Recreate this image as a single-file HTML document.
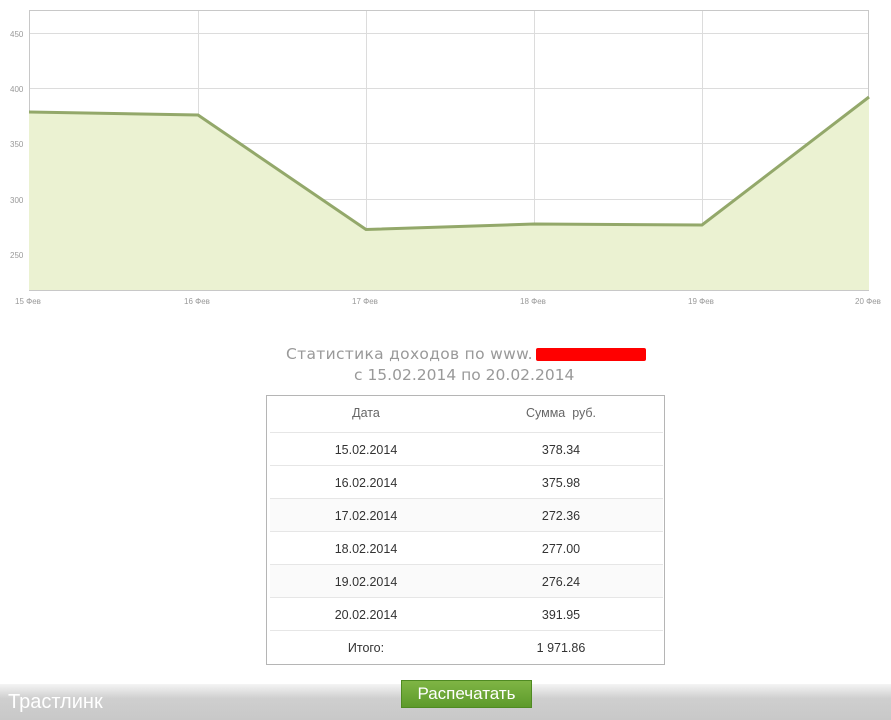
<!DOCTYPE html>
<html><head><meta charset="utf-8"><style>
body{margin:0;width:891px;height:720px;background:#fff;position:relative;overflow:hidden;font-family:"Liberation Sans","DejaVu Sans",sans-serif}
.t{position:absolute;left:266px;top:395px;width:397px;height:268px;border:1px solid #b5b5b5;background:#fff}
.r{position:absolute;left:3px;width:393px;height:33px;border-top:1px solid #e6e6e6;font-size:12.5px;color:#333}
.r span{position:absolute;top:10px;width:140px;text-align:center}
.a{left:26px}.b{left:221px}
.foot{position:absolute;left:0;top:684px;width:891px;height:36px;background:linear-gradient(#f4f4f4,#cfcfcf 40%,#c8c8c8)}
.ti{position:absolute;font-family:"DejaVu Sans",sans-serif;font-size:15.5px;color:#999;white-space:nowrap}
</style></head><body>
<svg width="891" height="320" style="position:absolute;left:0;top:0">
<g stroke="#dcdcdc" stroke-width="1">
<line x1="29" y1="33.5" x2="869" y2="33.5"/><line x1="29" y1="88.5" x2="869" y2="88.5"/><line x1="29" y1="143.5" x2="869" y2="143.5"/><line x1="29" y1="199.5" x2="869" y2="199.5"/><line x1="29" y1="254.5" x2="869" y2="254.5"/>
<line x1="198.5" y1="10" x2="198.5" y2="290"/><line x1="366.5" y1="10" x2="366.5" y2="290"/><line x1="534.5" y1="10" x2="534.5" y2="290"/><line x1="702.5" y1="10" x2="702.5" y2="290"/>
</g>
<rect x="29.5" y="10.5" width="839" height="280" fill="none" stroke="#c8c8c8"/>
<polygon points="29,112 198,115 366,229.5 534,224 702,225 869,97 869,290 29,290" fill="#ebf2d2"/>
<polyline points="29,112 198,115 366,229.5 534,224 702,225 869,97" fill="none" stroke="#93a86a" stroke-width="3"/>
<g font-size="8" fill="#999">
<text x="10" y="37">450</text><text x="10" y="92">400</text><text x="10" y="147">350</text><text x="10" y="203">300</text><text x="10" y="258">250</text>
<text x="15" y="304">15 Фев</text><text x="184" y="304">16 Фев</text><text x="352" y="304">17 Фев</text><text x="520" y="304">18 Фев</text><text x="688" y="304">19 Фев</text><text x="855" y="304">20 Фев</text>
</g></svg>
<div class="ti" style="left:286px;top:345px;letter-spacing:0.3px">Статистика доходов по www.</div>
<div style="position:absolute;left:536px;top:348px;width:110px;height:13px;background:#f00;border-radius:2px"></div>
<div class="ti" style="left:354px;top:366px">с 15.02.2014 по 20.02.2014</div>
<div class="t">
<div class="r" style="top:0;border-top:none;height:35px"><span class="a" style="color:#666">Дата</span><span class="b" style="color:#666">Сумма&nbsp; руб.</span></div>
<div class="r" style="top:36px"><span class="a">15.02.2014</span><span class="b">378.34</span></div>
<div class="r" style="top:69px"><span class="a">16.02.2014</span><span class="b">375.98</span></div>
<div class="r" style="top:102px;background:#fafafa"><span class="a">17.02.2014</span><span class="b">272.36</span></div>
<div class="r" style="top:135px"><span class="a">18.02.2014</span><span class="b">277.00</span></div>
<div class="r" style="top:168px;background:#fafafa"><span class="a">19.02.2014</span><span class="b">276.24</span></div>
<div class="r" style="top:201px"><span class="a">20.02.2014</span><span class="b">391.95</span></div>
<div class="r" style="top:234px"><span class="a">Итого:</span><span class="b">1 971.86</span></div>
</div>
<div class="foot"></div>
<div style="position:absolute;left:8px;top:691px;font-size:20px;color:#fff">Трастлинк</div>
<div style="position:absolute;left:401px;top:680px;width:129px;height:26px;background:linear-gradient(#7fb545,#5d9a2a);border:1px solid #4f8a22;color:#fff;font-size:17px;text-align:center;line-height:26px">Распечатать</div>
</body></html>
